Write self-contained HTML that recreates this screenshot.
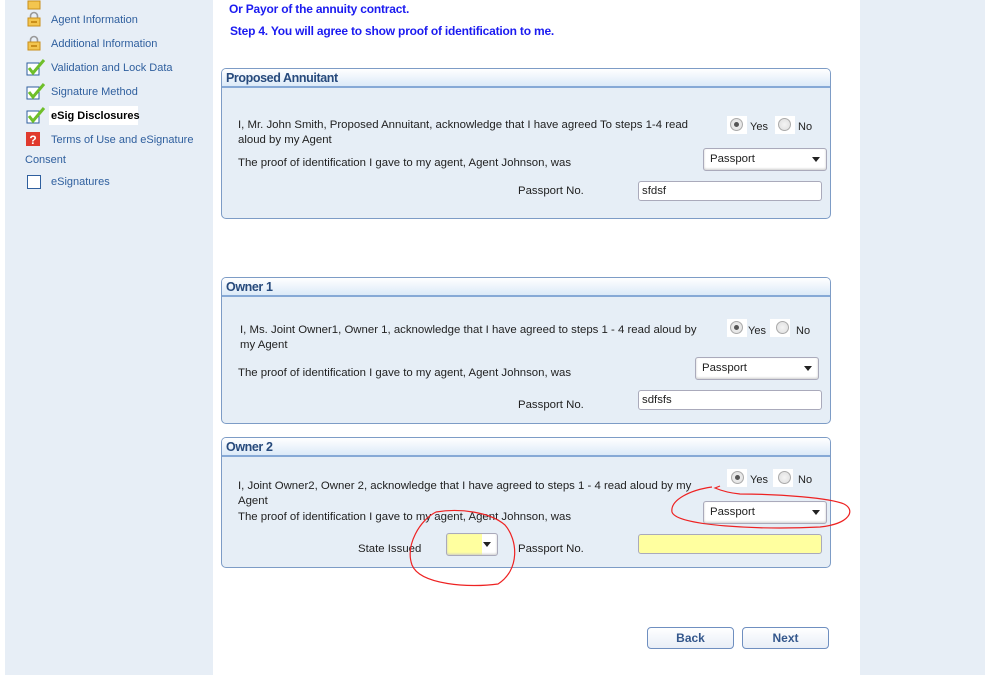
<!DOCTYPE html>
<html><head><meta charset="utf-8"><style>
*{margin:0;padding:0;box-sizing:border-box}
body{width:992px;height:675px;position:relative;background:#fff;font-family:"Liberation Sans",Arial,sans-serif;font-size:11px;color:#222;overflow:hidden}
.a{position:absolute;white-space:nowrap}
.m{font-size:11.4px}
.side{position:absolute;left:5px;top:0;width:208px;height:675px;background:#e7eef6}
.rside{position:absolute;left:860px;top:0;width:125px;height:675px;background:#e7eef6}
.nav{position:absolute;left:51px;color:#2f5f9e;font-size:11px}
.ico{position:absolute;left:26px;width:16px;height:16px}
.blue{color:#1b1bf0;font-weight:bold;font-size:12px;letter-spacing:-0.2px}
.pan{position:absolute;left:221px;width:610px;border:1px solid #7d9cc6;border-radius:5px;background:#e6eef6;overflow:hidden}
.ph{height:19px;background:linear-gradient(#fff,#dceaf8);border-bottom:2px solid #86a9d6;color:#274a7c;font-weight:bold;font-size:12.5px;padding:2px 4px;letter-spacing:-0.4px}
.sel{position:absolute;height:23px;border:1px solid #aab;border-radius:3px;background:#fff;padding:4px 6px;font-size:11.4px;box-shadow:inset 0 -1px 2px #ccc}
.sel:after{content:"";position:absolute;right:6px;top:8px;border-left:4px solid transparent;border-right:4px solid transparent;border-top:5px solid #222}
.inp{position:absolute;height:20px;border:1px solid #aab;border-radius:3px;background:#fff;padding:3px 3px;font-size:11.4px}
.rad{position:absolute;width:13px;height:13px;border-radius:50%;border:1px solid #aaa;background:radial-gradient(#f4f4f4,#ddd)}
.rad.on:after{content:"";position:absolute;left:3px;top:3px;width:5px;height:5px;border-radius:50%;background:#555}
.rbg{position:absolute;width:20px;height:18px;background:#fff}
.btn{position:absolute;top:627px;width:87px;height:22px;border:1px solid #6f8fc0;border-radius:4px;background:linear-gradient(#fff,#e8eef7);color:#34578c;font-weight:bold;font-size:12px;text-align:center;line-height:20px}
</style></head><body>
<div class="side"></div>
<div class="rside"></div>
<svg class="ico" style="top:-6px" viewBox="0 0 16 16"><rect x="2" y="7" width="12" height="8" fill="#f3c54f" stroke="#c98e1a"/></svg>
<svg class="ico" style="top:11px" viewBox="0 0 16 16"><path d="M4.5 7V5a3.5 3.5 0 0 1 7 0v2" fill="none" stroke="#999" stroke-width="1.6"/><rect x="2" y="7" width="12" height="8" fill="#f3c54f" stroke="#c98e1a"/><rect x="5" y="10" width="6" height="2" fill="#c98e1a"/></svg>
<div class="nav" style="top:14px">Agent Information</div>
<svg class="ico" style="top:35px" viewBox="0 0 16 16"><path d="M4.5 7V5a3.5 3.5 0 0 1 7 0v2" fill="none" stroke="#999" stroke-width="1.6"/><rect x="2" y="7" width="12" height="8" fill="#f3c54f" stroke="#c98e1a"/><rect x="5" y="10" width="6" height="2" fill="#c98e1a"/></svg>
<div class="nav" style="top:38px">Additional Information</div>
<svg class="ico" style="top:59px;width:20px;height:18px" viewBox="0 0 20 18"><rect x="1" y="4" width="12" height="12" fill="#fff" stroke="#2f5f9e"/><path d="M3 9l4 5L18 1" fill="none" stroke="#6fbf2a" stroke-width="3"/></svg>
<div class="nav" style="top:62px">Validation and Lock Data</div>
<svg class="ico" style="top:83px;width:20px;height:18px" viewBox="0 0 20 18"><rect x="1" y="4" width="12" height="12" fill="#fff" stroke="#2f5f9e"/><path d="M3 9l4 5L18 1" fill="none" stroke="#6fbf2a" stroke-width="3"/></svg>
<div class="nav" style="top:86px">Signature Method</div>
<svg class="ico" style="top:107px;width:20px;height:18px" viewBox="0 0 20 18"><rect x="1" y="4" width="12" height="12" fill="#fff" stroke="#2f5f9e"/><path d="M3 9l4 5L18 1" fill="none" stroke="#6fbf2a" stroke-width="3"/></svg>
<div class="a" style="left:49px;top:106px;width:89px;height:19px;background:#fff"></div>
<div class="nav" style="top:110px;color:#000;font-weight:bold">eSig Disclosures</div>
<svg class="ico" style="top:132px;width:14px;height:14px" viewBox="0 0 14 14"><rect width="14" height="14" fill="#e03a2e"/><text x="7" y="12" font-size="12" font-weight="bold" fill="#fff" text-anchor="middle" font-family="Liberation Sans">?</text></svg>
<div class="nav" style="top:134px">Terms of Use and eSignature</div>
<div class="nav" style="top:154px;left:25px">Consent</div>
<div class="a" style="left:27px;top:175px;width:14px;height:14px;border:1px solid #2f5f9e;background:#fff"></div>
<div class="nav" style="top:176px">eSignatures</div>

<div class="a blue" style="left:229px;top:2px">Or Payor of the annuity contract.</div>
<div class="a blue" style="left:230px;top:24px">Step 4. You will agree to show proof of identification to me.</div>

<div class="pan" style="top:68px;height:151px"><div class="ph">Proposed Annuitant</div></div>
<div class="a m" style="left:238px;top:118px;line-height:15px">I, Mr. John Smith, Proposed Annuitant, acknowledge that I have agreed To steps 1-4 read<br>aloud by my Agent</div>
<div class="rbg" style="left:727px;top:116px"></div><div class="rad on" style="left:730px;top:118px"></div><div class="a" style="left:750px;top:121px">Yes</div>
<div class="rbg" style="left:775px;top:116px"></div><div class="rad" style="left:778px;top:118px"></div><div class="a" style="left:798px;top:121px">No</div>
<div class="a m" style="left:238px;top:157px">The proof of identification I gave to my agent, Agent Johnson, was</div>
<div class="sel" style="left:703px;top:148px;width:124px">Passport</div>
<div class="a m" style="left:518px;top:185px">Passport No.</div>
<div class="inp" style="left:638px;top:181px;width:184px">sfdsf</div>

<div class="pan" style="top:277px;height:147px"><div class="ph">Owner 1</div></div>
<div class="a m" style="left:240px;top:323px;line-height:15px">I, Ms. Joint Owner1, Owner 1, acknowledge that I have agreed to steps 1 - 4 read aloud by<br>my Agent</div>
<div class="rbg" style="left:727px;top:319px"></div><div class="rad on" style="left:730px;top:321px"></div><div class="a" style="left:748px;top:325px">Yes</div>
<div class="rbg" style="left:770px;top:319px"></div><div class="rad" style="left:776px;top:321px"></div><div class="a" style="left:796px;top:325px">No</div>
<div class="a m" style="left:238px;top:367px">The proof of identification I gave to my agent, Agent Johnson, was</div>
<div class="sel" style="left:695px;top:357px;width:124px">Passport</div>
<div class="a m" style="left:518px;top:399px">Passport No.</div>
<div class="inp" style="left:638px;top:390px;width:184px">sdfsfs</div>

<div class="pan" style="top:437px;height:131px"><div class="ph">Owner 2</div></div>
<div class="a m" style="left:238px;top:479px;line-height:15px">I, Joint Owner2, Owner 2, acknowledge that I have agreed to steps 1 - 4 read aloud by my<br>Agent</div>
<div class="rbg" style="left:727px;top:469px"></div><div class="rad on" style="left:731px;top:471px"></div><div class="a" style="left:750px;top:474px">Yes</div>
<div class="rbg" style="left:773px;top:469px"></div><div class="rad" style="left:778px;top:471px"></div><div class="a" style="left:798px;top:474px">No</div>
<div class="a m" style="left:238px;top:511px">The proof of identification I gave to my agent, Agent Johnson, was</div>
<div class="sel" style="left:703px;top:501px;width:124px">Passport</div>
<div class="a m" style="left:358px;top:543px">State Issued</div>
<div class="sel" style="left:446px;top:533px;width:52px;background:linear-gradient(90deg,#ffff9f 70%,#fff 70%)"></div>
<div class="a m" style="left:518px;top:543px">Passport No.</div>
<div class="inp" style="left:638px;top:534px;width:184px;background:#ffff9f"></div>

<div class="btn" style="left:647px">Back</div>
<div class="btn" style="left:742px">Next</div>

<svg class="a" style="left:0;top:0" width="992" height="675"><g fill="none" stroke="#e22" stroke-width="1.2">
<path d="M712 487 C690 490,670 500,672 512 C676 526,760 530,820 527 C850 524,856 510,844 504 C830 498,780 494,740 494 C730 493,722 491,715 488 L720 486"/>
<path d="M436 512 C420 520,405 545,412 565 C420 585,470 588,498 584 C520 570,518 540,505 525 C490 512,460 508,436 512"/>
</g></svg>
</body></html>
